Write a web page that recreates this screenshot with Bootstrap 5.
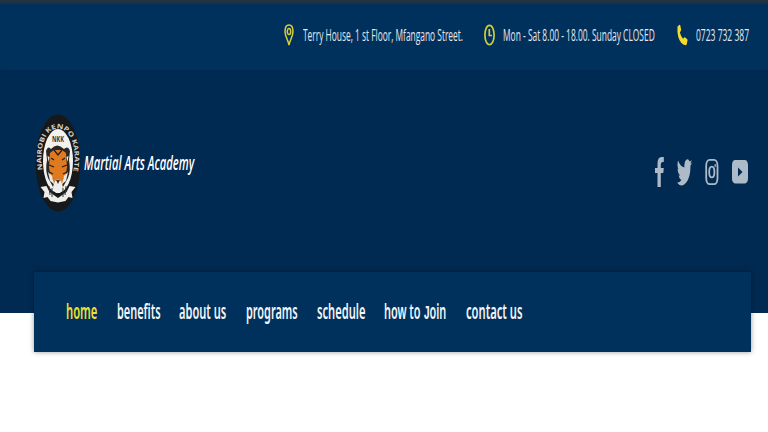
<!DOCTYPE html>
<html lang="en">
<head>
<meta charset="utf-8">
<meta name="viewport" content="width=device-width, initial-scale=1">
<title>Martial Arts Academy</title>
<link rel="stylesheet" href="https://cdn.jsdelivr.net/npm/bootstrap@5.3.0/dist/css/bootstrap.min.css">
<style>
body{font-family:"Open Sans","Noto Sans",sans-serif;height:432px;overflow:hidden;background:#fff}
.site-head{height:313px;background:#002a52}
.topbar{height:70px;background:#00305c;border-top:3px solid #1f3344;padding:0 19px 3px 0;box-shadow:inset 0 2px 2px #0a315a}
.topbar .item{margin-right:21px}
.topbar .item svg{margin-right:8.5px}
.topbar .item:nth-child(2){margin-right:22px}
.topbar .fit{font-size:17px;font-weight:500;color:#e2e8ee;line-height:24px}
.topbar .fit span{position:relative;top:-.5px}
.brand-row{height:202px;padding:0 20px 0 35px}
.brand-row .brand{margin-top:-17px}
.brand-row .fit{font-size:20.5px;font-weight:650;font-style:italic;color:#fff;line-height:26px;margin-left:3px;padding-bottom:1px}
.social{padding-top:2px;gap:13px}
.menu{height:80px;margin:-41px 17px 0 34px;padding:0 0 0 32px;background:#00305c;box-shadow:0 0 5px rgba(0,0,0,.42);position:relative}
.menu .fit{font-family:"Noto Sans","Open Sans",sans-serif;font-size:20.6px;font-weight:650;color:#f2f5f7;line-height:30px}
.menu .active .fit{color:#f1e02c}
.main-links{gap:19.1px}
.menu .bar-j{font-family:"Liberation Mono",monospace;letter-spacing:-1px}
.fit{display:block;white-space:nowrap}
.fit>span{display:inline-block;transform-origin:0 50%}
.w-addr{width:160px}.w-hours{width:152px}.w-phone{width:53px}.w-brand{width:110px}
.w-home{width:31.5px}.w-ben{width:43.5px}.w-about{width:47.3px}.w-prog{width:52px}
.w-sched{width:48.7px}.w-join{width:62px}.w-contact{width:56.5px}
.crest text{font-family:"Open Sans",sans-serif;font-weight:700;fill:#cfd0d0}
svg{display:block;flex:none}
</style>
<script src="https://cdn.jsdelivr.net/npm/bootstrap@5.3.0/dist/js/bootstrap.bundle.min.js"></script>
</head>
<body>
<header class="site-head">
  <div class="topbar d-flex justify-content-end align-items-center">
    <div class="item d-flex align-items-center">
      <svg width="10" height="22" viewBox="0 0 10 22" fill="none" stroke="#d8cf3a" stroke-width="1.5"><path d="M5 21C4 16 1 12 1 7.500C1 3.500 2.700 1 5 1s4 2.500 4 6.500C9 12 6 16 5 21z"/><ellipse cx="5" cy="7.500" rx="1.700" ry="3"/></svg>
      <div class="fit w-addr"><span>Terry House, 1 st Floor, Mfangano Street.</span></div>
    </div>
    <div class="item d-flex align-items-center">
      <svg width="11" height="22" viewBox="0 0 11 22" fill="none" stroke="#d0cc3a" stroke-width="1.700"><ellipse cx="5.500" cy="11" rx="4.600" ry="9.700"/><path d="M5.300 5v6.500H8"/></svg>
      <div class="fit w-hours"><span>Mon - Sat 8.00 - 18.00. Sunday CLOSED</span></div>
    </div>
    <div class="d-flex align-items-center">
      <svg class="me-2" width="11" height="22" viewBox="0 0 11 22" fill="#f5dc28"><path d="M.5 2.500L2.500.800Q3 .500 3.300 1.400L4.100 5.500Q4.200 6.300 3.700 7L2.900 8.500Q4 12.800 6.100 14.800L7.200 13.500Q7.600 13 8 13.300L10.200 15.200Q10.700 15.700 10.500 16.500L9.600 20.500Q9.400 21.300 8.800 21.300Q3.500 20.500 1.300 13Q0 8.500.5 2.500z"/></svg>
      <div class="fit w-phone"><span>0723 732 387</span></div>
    </div>
  </div>
  <div class="brand-row d-flex justify-content-between align-items-center">
    <a href="#" class="brand d-flex align-items-center text-decoration-none">
      <svg class="crest" width="46" height="98" viewBox="0 0 46 98">
        <defs><path id="ring" d="M7.500 56C3.500 32 11 14.500 23 14.500S42.500 32 38.500 56"/></defs>
        <ellipse cx="23" cy="49" rx="22.400" ry="48.500" fill="#171819"/>
        <ellipse cx="23" cy="47" rx="15" ry="32" fill="#f3f2ef"/>
        <text font-size="6.500"><textPath href="#ring" textLength="100" lengthAdjust="spacingAndGlyphs">NAIROBI KENPO KARATE</textPath></text>
        <text x="17" y="28" font-size="9" textLength="12" lengthAdjust="spacingAndGlyphs" style="fill:#333">NKK</text>
        <path d="M5.500 73l6-1 3 6 8.500 6 8.500-6 3-6 6 1-4 5 1 6-4-1-3 4-7.500 1.500L15.500 87l-3-4-4 1 1-6z" fill="#ededeb"/>
        <path d="M11 37q2-6 5-2 6-7 13 0 4-4 6 2l-1 9q2 11-1 18l-5 9-5 7-5-7-5-9q-3-8-1-18z" fill="#2a2724"/>
        <path d="M15 39l4-3h8l4 3 1 14-2 13-4 7h-6l-4-7-2-13z" fill="#df7a20"/>
        <path d="M19 36l4 5 4-5M14 51l5 2M32 51l-5 2M14 58l4 2M32 58l-4 2M14 64l4 1M32 64l-4 1M16 44l3 2M30 44l-3 2" fill="none" stroke="#251d18" stroke-width="1.300"/>
        <path d="M12.500 42l2 1-1 5zM33.500 42l-2 1 1 5zM13 58l4 4 2 8-4-3zM33 58l-4 4-2 8 4-3z" fill="#e9e7e2"/>
        <path d="M20 67q3-3 6 0l2 6-3 6h-4l-3-6z" fill="#eee"/><path d="M21 66h4l-2 4z" fill="#333"/>
        <path d="M14 72l1 9M17 74v9M31 72l-1 9M28 74v9" stroke="#333" stroke-width="1"/>
      </svg>
      <div class="fit w-brand"><span>Martial Arts Academy</span></div>
    </a>
    <div class="social d-flex align-items-center">
      <svg width="9" height="32" viewBox="0 0 9 32" fill="#adbac7"><path d="M2.500 31V17H0v-5h2.500V8Q2.500 1 6.500 1H8.800v5H7.500Q5.800 6 5.800 8.500V12h3l-.5 5H5.800v14z"/></svg>
      <svg width="15" height="27" viewBox="0 2 24 20.200" preserveAspectRatio="none" fill="#adbac7"><path d="M24 4.600c-.9.400-1.800.7-2.800.8 1-.6 1.800-1.600 2.200-2.700-1 .6-2 1-3.100 1.200A4.900 4.900 0 0 0 11.900 8.400C7.800 8.200 4.200 6.300 1.700 3.200-.4 6.800 1.500 9.200 3.200 9.800c-.8 0-1.600-.2-2.200-.6 0 2.300 1.600 4.400 3.900 4.900-.7.200-1.500.2-2.200.1.600 2 2.400 3.400 4.600 3.400A9.900 9.900 0 0 1 0 19.500 14 14 0 0 0 21.500 7.100C22.500 6.400 23.300 5.600 24 4.600z"/></svg>
      <svg width="14" height="28" viewBox="0 0 14 28" fill="none" stroke="#adbac7" stroke-width="1.800"><rect x="1.200" y="1.800" width="11.300" height="24.400" rx="3.500" ry="6"/><ellipse cx="6.800" cy="14" rx="2.600" ry="5.400"/><path d="M9.500 7.500h1.400" stroke-width="2.500"/></svg>
      <svg width="16" height="24" viewBox="0 0 16 24"><rect width="16" height="23.500" rx="3" ry="5" fill="#adbac7"/><path d="M6 7.500l4.500 4.500L6 16.500z" fill="#002a52"/></svg>
    </div>
  </div>
</header>
<nav class="menu d-flex align-items-center">
  <ul class="nav flex-nowrap main-links">
    <li class="active"><div class="fit w-home"><span>home</span></div></li>
    <li><div class="fit w-ben"><span>benefits</span></div></li>
    <li><div class="fit w-about"><span>about us</span></div></li>
    <li><div class="fit w-prog"><span>programs</span></div></li>
    <li><div class="fit w-sched"><span>schedule</span></div></li>
    <li><div class="fit w-join"><span>how to <span class="bar-j">J</span>oin</span></div></li>
    <li><div class="fit w-contact"><span>contact us</span></div></li>
  </ul>
</nav>
<script>
// Condense each label to the width of its box.
document.querySelectorAll('.fit').forEach(function (box) {
  var label = box.firstElementChild;
  label.style.transform = 'scaleX(' + box.getBoundingClientRect().width / label.offsetWidth + ')';
});
</script>
</body>
</html>
